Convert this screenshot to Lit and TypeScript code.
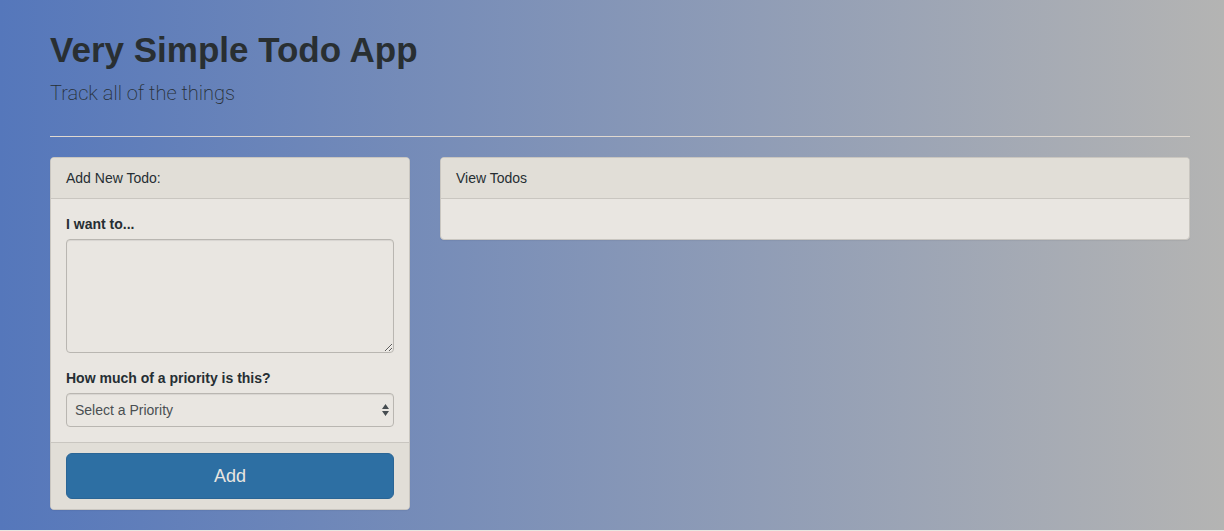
import { LitElement, html, css } from "lit";
import { customElement, state } from "lit/decorators.js";

interface Todo {
  text: string;
  priority: string;
}

@customElement("app-root")
export class AppRoot extends LitElement {
  static styles = css`
    :host {
      display: block;
      min-height: 100vh;
      background: #e9e6e1;
      color: #262e33;
      font: 14px/20px "Liberation Sans", Arial, sans-serif;
    }
    *, *::before, *::after { box-sizing: border-box; }
    .page {
      padding: 30px 34px 20px 50px;
      background: linear-gradient(to right, #5577bb, #b4b4b3);
    }
    .title {
      margin: 0;
      font: 600 35px/40px "Liberation Sans", Arial, sans-serif;
      color: #292f32;
    }
    .lead {
      margin: 8px 0 28px;
      font: 200 20px/30px Roboto, sans-serif;
    }
    .rule {
      margin: 0 0 20px;
      border: 0;
      border-top: 1px solid #dfd8d0;
    }
    .columns {
      display: grid;
      grid-template-columns: repeat(12, 1fr);
      column-gap: 30px;
      align-items: start;
    }
    .narrow { grid-column: span 4; }
    .wide { grid-column: span 8; }
    .panel {
      background: #e9e6e1;
      border: 1px solid #c9c6c0;
      border-radius: 4px;
      box-shadow: 0 1px 1px rgba(0, 0, 0, 0.05);
      overflow: hidden;
    }
    .heading {
      margin: 0;
      padding: 10px 15px;
      font-size: 14px;
      font-weight: 400;
      background: #e1ded7;
      border-bottom: 1px solid #c9c6c0;
    }
    .body { padding: 15px; }
    .footer {
      padding: 10px 15px;
      background: #e1ded7;
      border-top: 1px solid #c9c6c0;
    }
    .label {
      display: block;
      margin-bottom: 5px;
      font-weight: 700;
    }
    .control {
      display: block;
      width: 100%;
      margin: 0;
      color: #4a4f52;
      font: inherit;
      background: #e9e6e1;
      border: 1px solid #b9b6b1;
      border-radius: 4px;
      box-shadow: inset 0 1px 1px rgba(0, 0, 0, 0.075);
    }
    .text {
      height: 114px;
      margin-bottom: 15px;
      padding: 6px 12px;
      resize: vertical;
    }
    .select-wrap { position: relative; }
    .select {
      height: 34px;
      padding: 0 20px 0 8px;
      appearance: none;
    }
    .arrows {
      position: absolute;
      top: 10px;
      right: 5px;
      width: 7px;
      height: 14px;
      fill: #464d51;
      pointer-events: none;
    }
    .add {
      display: block;
      width: 100%;
      padding: 10px 16px;
      color: #e9e6e1;
      font: 18px/24px "Liberation Sans", Arial, sans-serif;
      background: #2d6fa3;
      border: 1px solid #2a6595;
      border-radius: 6px;
      cursor: pointer;
    }
    .todos {
      min-height: 10px;
      margin: 0;
      padding: 0;
      list-style: none;
    }
  `;

  @state() private todos: Todo[] = [];

  private add(e: Event) {
    e.preventDefault();
    const form = e.target as HTMLFormElement;
    const data = new FormData(form);
    const text = String(data.get("text") ?? "").trim();
    if (!text) return;
    this.todos = [...this.todos, { text, priority: String(data.get("priority") ?? "") }];
    form.reset();
  }

  render() {
    return html`
      <main class="page">
        <header>
          <h1 class="title">Very Simple Todo App</h1>
          <p class="lead">Track all of the things</p>
        </header>
        <hr class="rule" />
        <div class="columns">
          <form class="panel narrow" @submit=${this.add}>
            <h2 class="heading">Add New Todo:</h2>
            <div class="body">
              <label class="label" for="text">I want to...</label>
              <textarea class="control text" id="text" name="text"></textarea>
              <label class="label" for="priority">How much of a priority is this?</label>
              <div class="select-wrap">
                <select class="control select" id="priority" name="priority">
                  <option value="">Select a Priority</option>
                  <option value="1">Low Priority</option>
                  <option value="2">Medium Priority</option>
                  <option value="3">High Priority</option>
                </select>
                <svg class="arrows" viewBox="0 0 7 14" aria-hidden="true">
                  <path d="M3.5 1 7 6H0zM3.5 13 0 8h7z" />
                </svg>
              </div>
            </div>
            <div class="footer">
              <button class="add" type="submit">Add</button>
            </div>
          </form>
          <section class="panel wide">
            <h2 class="heading">View Todos</h2>
            <div class="body">
              <ul class="todos">
                ${this.todos.map((t) => html`<li>${t.text}</li>`)}
              </ul>
            </div>
          </section>
        </div>
      </main>
    `;
  }
}
